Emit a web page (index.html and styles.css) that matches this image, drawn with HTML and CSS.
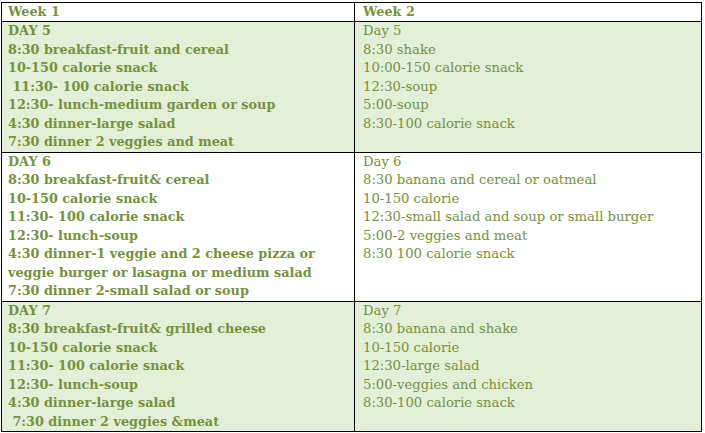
FILE: index.html
```html
<!DOCTYPE html>
<html>
<head>
<meta charset="utf-8">
<link rel="stylesheet" href="styles.css">
</head>
<body>
<table class="plan">
  <colgroup>
    <col class="col1">
    <col class="col2">
  </colgroup>
  <tr class="head">
    <th>Week 1</th>
    <th class="c2h">Week 2</th>
  </tr>
  <tr class="green">
    <td class="strong">
      <div>DAY 5</div>
      <div>8:30 breakfast-fruit and cereal</div>
      <div>10-150 calorie snack</div>
      <div>&nbsp;11:30- 100 calorie snack</div>
      <div>12:30- lunch-medium garden or soup</div>
      <div>4:30 dinner-large salad</div>
      <div>7:30 dinner 2 veggies and meat</div>
    </td>
    <td class="c2">
      <div>Day 5</div>
      <div>8:30 shake</div>
      <div>10:00-150 calorie snack</div>
      <div>12:30-soup</div>
      <div>5:00-soup</div>
      <div>8:30-100 calorie snack</div>
    </td>
  </tr>
  <tr class="white">
    <td class="strong">
      <div>DAY 6</div>
      <div>8:30 breakfast-fruit&amp; cereal</div>
      <div>10-150 calorie snack</div>
      <div>11:30- 100 calorie snack</div>
      <div>12:30- lunch-soup</div>
      <div>4:30 dinner-1 veggie and 2 cheese pizza or</div>
      <div>veggie burger or lasagna or medium salad</div>
      <div>7:30 dinner 2-small salad or soup</div>
    </td>
    <td class="c2">
      <div>Day 6</div>
      <div>8:30 banana and cereal or oatmeal</div>
      <div>10-150 calorie</div>
      <div>12:30-small salad and soup or small burger</div>
      <div>5:00-2 veggies and meat</div>
      <div>8:30 100 calorie snack</div>
    </td>
  </tr>
  <tr class="green">
    <td class="strong">
      <div>DAY 7</div>
      <div>8:30 breakfast-fruit&amp; grilled cheese</div>
      <div>10-150 calorie snack</div>
      <div>11:30- 100 calorie snack</div>
      <div>12:30- lunch-soup</div>
      <div>4:30 dinner-large salad</div>
      <div>&nbsp;7:30 dinner 2 veggies &amp;meat</div>
    </td>
    <td class="c2">
      <div>Day 7</div>
      <div>8:30 banana and shake</div>
      <div>10-150 calorie</div>
      <div>12:30-large salad</div>
      <div>5:00-veggies and chicken</div>
      <div>8:30-100 calorie snack</div>
    </td>
  </tr>
</table>
</body>
</html>
```
FILE: styles.css
```css
html, body {
  margin: 0;
  padding: 0;
  background: #ffffff;
}
body {
  padding: 2px 0 0 1px;
  font-family: "DejaVu Serif", "Liberation Serif", serif;
  color: #76923c;
}
.plan {
  border-collapse: collapse;
  width: 701px;
  table-layout: fixed;
}
.col1 { width: 353px; }
.plan th, .plan td {
  box-sizing: border-box;
  border: 1px solid #000;
  vertical-align: top;
  text-align: left;
  padding: 0 6px 0 6px;
  line-height: 18.5px;
  white-space: nowrap;
}
.plan th {
  font-weight: bold;
  font-size: 12.8px;
  height: 19px;
  line-height: 18px;
}
.plan th.c2h { padding-left: 8px; }
.green td { background: #e4efd8; }
.white td { background: #ffffff; }
.strong {
  font-weight: bold;
  font-size: 12.8px;
}
.plan td.c2 {
  font-size: 13.2px;
  padding-left: 8px;
}
```
